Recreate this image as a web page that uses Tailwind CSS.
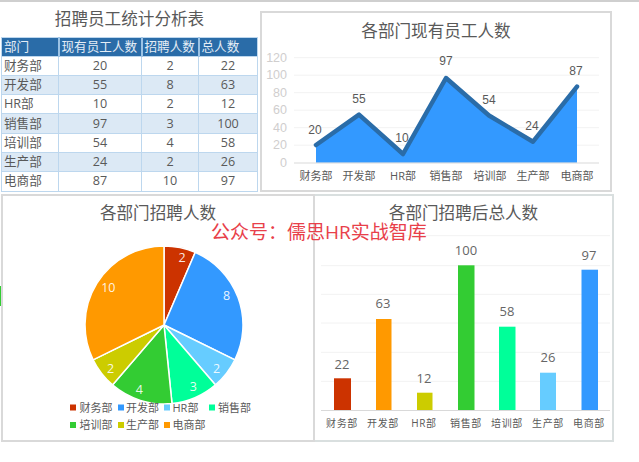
<!DOCTYPE html>
<html lang="zh-CN">
<head>
    <meta charset="UTF-8">
    <title>招聘员工统计分析表</title>
    <script src="https://cdn.jsdelivr.net/npm/@tailwindcss/browser@4"></script>
</head>
<body class="bg-white font-['Open_Sans','Noto_Sans_CJK_SC',sans-serif] text-[#595959]">
<div class="relative w-[639px] h-[462px] overflow-hidden">
    <div class="h-[2px] bg-[#cfcfcf]"></div>

    <!-- top row: table + line chart -->
    <div class="flex h-[192px]">
        <div class="w-[257px] ml-px">
            <div class="h-[35px] flex items-center justify-center text-[16.6px]">招聘员工统计分析表</div>
            <table class="table-fixed w-[256px] border-collapse border border-[#bdd7ee] text-[12.6px] leading-[16px] text-center">
                <colgroup>
                    <col class="w-[57px]"><col class="w-[83px]"><col class="w-[57px]"><col class="w-[59px]">
                </colgroup>
                <thead>
                    <tr class="h-[18.5px] bg-[#2a6ca8] text-[#e4edf6] text-left whitespace-nowrap">
                        <th class="font-normal pl-[2px] py-0 border-r-2 border-[#9cc3e5]">部门</th>
                        <th class="font-normal pl-[2px] py-0 border-r-2 border-[#9cc3e5]">现有员工人数</th>
                        <th class="font-normal pl-[2px] py-0 border-r-2 border-[#9cc3e5]">招聘人数</th>
                        <th class="font-normal pl-[2px] py-0">总人数</th>
                    </tr>
                </thead>
                <tbody>
                    <tr class="h-[19.3px]"><td class="p-0 pl-[2px] text-left border border-[#bdd7ee]">财务部</td><td class="p-0 border border-[#bdd7ee]">20</td><td class="p-0 border border-[#bdd7ee]">2</td><td class="p-0 border border-[#bdd7ee]">22</td></tr>
                    <tr class="h-[19.3px] bg-[#dce9f5]"><td class="p-0 pl-[2px] text-left border border-[#bdd7ee]">开发部</td><td class="p-0 border border-[#bdd7ee]">55</td><td class="p-0 border border-[#bdd7ee]">8</td><td class="p-0 border border-[#bdd7ee]">63</td></tr>
                    <tr class="h-[19.3px]"><td class="p-0 pl-[2px] text-left border border-[#bdd7ee]">HR部</td><td class="p-0 border border-[#bdd7ee]">10</td><td class="p-0 border border-[#bdd7ee]">2</td><td class="p-0 border border-[#bdd7ee]">12</td></tr>
                    <tr class="h-[19.3px] bg-[#dce9f5]"><td class="p-0 pl-[2px] text-left border border-[#bdd7ee]">销售部</td><td class="p-0 border border-[#bdd7ee]">97</td><td class="p-0 border border-[#bdd7ee]">3</td><td class="p-0 border border-[#bdd7ee]">100</td></tr>
                    <tr class="h-[19.3px]"><td class="p-0 pl-[2px] text-left border border-[#bdd7ee]">培训部</td><td class="p-0 border border-[#bdd7ee]">54</td><td class="p-0 border border-[#bdd7ee]">4</td><td class="p-0 border border-[#bdd7ee]">58</td></tr>
                    <tr class="h-[19.3px] bg-[#dce9f5]"><td class="p-0 pl-[2px] text-left border border-[#bdd7ee]">生产部</td><td class="p-0 border border-[#bdd7ee]">24</td><td class="p-0 border border-[#bdd7ee]">2</td><td class="p-0 border border-[#bdd7ee]">26</td></tr>
                    <tr class="h-[19.3px]"><td class="p-0 pl-[2px] text-left border border-[#bdd7ee]">电商部</td><td class="p-0 border border-[#bdd7ee]">87</td><td class="p-0 border border-[#bdd7ee]">10</td><td class="p-0 border border-[#bdd7ee]">97</td></tr>
                </tbody>
            </table>
        </div>

        <div class="ml-[2px] mt-[9px] w-[352px] h-[181px] border-2 border-[#d9d9d9]">
            <div class="h-[36px] flex items-center justify-center text-[16.6px]">各部门现有员工人数</div>
            <svg class="block w-[348px] h-[141px]" viewBox="262 49 348 141">
                <g stroke="#f2f2f2" stroke-width="1">
                    <path d="M294 57.7H599M294 75.2H599M294 92.7H599M294 110.2H599M294 127.7H599M294 145.2H599"/>
                </g>
                <g fill="#d0cece" font-size="12.5" text-anchor="end" font-family="Liberation Sans">
                    <text x="287" y="61.5">120</text><text x="287" y="79">100</text><text x="287" y="96.5">80</text>
                    <text x="287" y="114">60</text><text x="287" y="131.5">40</text><text x="287" y="149">20</text><text x="287" y="166.5">0</text>
                </g>
                <path d="M316 145L359 114.6L403 154L446 78L489 115.5L533 141.7L577 86.6V162.7H316Z" fill="#3399ff"/>
                <path d="M294 163H599" stroke="#d9d9d9" stroke-width="1"/>
                <path d="M316 145L359 114.6L403 154L446 78L489 115.5L533 141.7L577 86.6" fill="none" stroke="#2a6ca8" stroke-width="4.5" stroke-linecap="round" stroke-linejoin="round"/>
                <g fill="#595959" font-size="12" text-anchor="middle" font-family="Liberation Sans">
                    <text x="315" y="133.5">20</text><text x="359" y="102.5">55</text><text x="402" y="142">10</text>
                    <text x="446" y="65">97</text><text x="489" y="103.5">54</text><text x="532" y="129.5">24</text><text x="576" y="74.5">87</text>
                </g>
                <g fill="#595959" font-size="11" text-anchor="middle">
                    <text x="316" y="180">财务部</text><text x="359" y="180">开发部</text><text x="403" y="180">HR部</text>
                    <text x="446" y="180">销售部</text><text x="490" y="180">培训部</text><text x="533" y="180">生产部</text><text x="577" y="180">电商部</text>
                </g>
            </svg>
        </div>
    </div>

    <!-- bottom row: pie + bars -->
    <div class="flex ml-px h-[248px]">
        <div class="w-[314px] border-2 border-[#d9d9d9]">
            <div class="h-[34px] flex items-center justify-center text-[16.6px]">各部门招聘人数</div>
            <svg class="block w-[310px] h-[210px]" viewBox="3 230 310 210">
                <g stroke="#ffffff" stroke-width="1.5">
                    <path d="M164 325L164 246A79 79 0 0 1 195.2 252.4Z" fill="#cc3300"/>
                    <path d="M164 325L195.2 252.4A79 79 0 0 1 234.9 359.8Z" fill="#3399ff"/>
                    <path d="M164 325L234.9 359.8A79 79 0 0 1 215.5 384.9Z" fill="#66ccff"/>
                    <path d="M164 325L215.5 384.9A79 79 0 0 1 172 403.6Z" fill="#00ff99"/>
                    <path d="M164 325L172 403.6A79 79 0 0 1 112.5 384.9Z" fill="#33cc33"/>
                    <path d="M164 325L112.5 384.9A79 79 0 0 1 93.1 359.8Z" fill="#cccc00"/>
                    <path d="M164 325L93.1 359.8A79 79 0 0 1 164 246Z" fill="#ff9900"/>
                </g>
                <g fill="#ffffff" fill-opacity="0.9" font-size="12.5" text-anchor="middle">
                    <text x="182" y="262">2</text><text x="226.7" y="299.5">8</text><text x="216.7" y="372.5">2</text>
                    <text x="193.3" y="390.5">3</text><text x="139.3" y="393.5">4</text><text x="110.7" y="372.5">2</text><text x="108.3" y="291.5">10</text>
                </g>
                <rect x="70" y="404.5" width="6" height="6" fill="#cc3300"/>
                <rect x="118" y="404.5" width="6" height="6" fill="#3399ff"/>
                <rect x="164" y="404.5" width="6" height="6" fill="#66ccff"/>
                <rect x="209" y="404.5" width="6" height="6" fill="#00ff99"/>
                <rect x="70" y="422" width="6" height="6" fill="#33cc33"/>
                <rect x="118" y="422" width="6" height="6" fill="#cccc00"/>
                <rect x="164" y="422" width="6" height="6" fill="#ff9900"/>
                <g fill="#595959" font-size="11">
                    <text x="79.5" y="411.5">财务部</text><text x="126" y="411.5">开发部</text><text x="172.5" y="411.5">HR部</text><text x="218" y="411.5">销售部</text>
                    <text x="79.5" y="429">培训部</text><text x="126" y="429">生产部</text><text x="172.5" y="429">电商部</text>
                </g>
            </svg>
        </div>
        <div class="w-[299px] border-y-2 border-r-2 border-[#d9dfdf]">
            <div class="h-[34px] flex items-center justify-center text-[16.6px]">各部门招聘后总人数</div>
            <svg class="block w-[297px] h-[210px]" viewBox="315 230 297 210">
                <path d="M321 235.7H610M321 265.7H610M321 294.3H610M321 323H610M321 352.3H610M321 381.3H610" stroke="#f2f2f2" stroke-width="1"/>
                <rect x="334" y="378.3" width="17" height="31.7" fill="#cc3300"/>
                <rect x="376" y="319" width="15.5" height="91" fill="#ff9900"/>
                <rect x="417" y="392.7" width="15.5" height="17.3" fill="#cccc00"/>
                <rect x="458" y="265.3" width="16.5" height="144.7" fill="#33cc33"/>
                <rect x="499" y="326.7" width="16.5" height="83.3" fill="#00ff99"/>
                <rect x="540" y="372.7" width="16" height="37.3" fill="#66ccff"/>
                <rect x="581.5" y="269.7" width="16.5" height="140.3" fill="#3399ff"/>
                <path d="M321 410.5H610" stroke="#d9d9d9" stroke-width="1"/>
                <g fill="#666666" font-size="13" text-anchor="middle">
                    <text x="342" y="368.5">22</text><text x="383" y="308">63</text><text x="424" y="383">12</text>
                    <text x="466" y="255">100</text><text x="507" y="316">58</text><text x="548" y="362">26</text><text x="589" y="260">97</text>
                </g>
                <g fill="#595959" font-size="10" letter-spacing="0.6" text-anchor="middle">
                    <text x="342" y="427">财务部</text><text x="383" y="427">开发部</text><text x="424" y="427">HR部</text>
                    <text x="466" y="427">销售部</text><text x="507" y="427">培训部</text><text x="548" y="427">生产部</text><text x="589" y="427">电商部</text>
                </g>
            </svg>
        </div>
    </div>

    <!-- watermark over the charts -->
    <div class="absolute left-[211px] top-[220px] font-['Open_Sans','Noto_Sans_CJK_TC',sans-serif] text-[19px] leading-[24px] whitespace-nowrap text-[#e8404a]">公众号：儒思HR实战智库</div>
    <div class="absolute left-0 top-[286px] w-px h-[20px] bg-[#33cc33]"></div>
</div>
</body>
</html>
